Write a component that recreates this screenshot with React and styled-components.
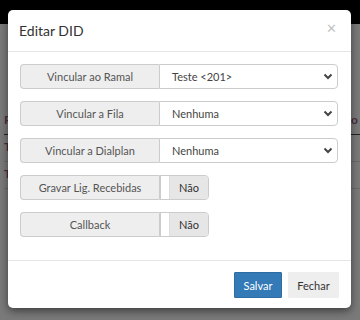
import React from 'react';
import styled, { createGlobalStyle } from 'styled-components';

const GlobalStyle = createGlobalStyle`
  html, body { margin: 0; padding: 0; }
  body { font-family: Lato, "Liberation Sans", sans-serif; }
  #root { height: 320px; overflow: hidden; }
`;

const Page = styled.div`
  position: relative;
  height: 320px;
  background: #7a7a7a;
`;

const TopBar = styled.div`
  height: 24px;
  background: #000;
`;

const BgTable = styled.div`
  padding: 84px 0 0 4px;
  font-size: 12px;
  font-weight: bold;
  color: #4a2f3e;
`;

const BgRow = styled.div`
  height: 26px;
  line-height: 24px;
  border-bottom: 1px solid ${p => (p.$head ? '#222' : '#6a6a6a')};
  display: flex;
  justify-content: space-between;
  padding-right: 2px;
`;

const Modal = styled.div`
  position: absolute;
  left: 8px;
  top: 10px;
  width: 343px;
  height: 298px;
  background: #fff;
  border-radius: 5px;
  box-shadow: 0 3px 9px rgba(0, 0, 0, 0.5);
  display: flex;
  flex-direction: column;
`;

const Header = styled.div`
  height: 41px;
  padding: 0 12px 0 11px;
  border-bottom: 1px solid #e5e5e5;
  display: flex;
  align-items: center;
  justify-content: space-between;
`;

const Title = styled.h4`
  margin: 0;
  font-size: 14px;
  font-weight: normal;
  color: #333;
`;

const Close = styled.span`
  font-family: "DejaVu Sans", sans-serif;
  font-size: 13px;
  color: #c4c4c4;
  margin-top: -4px;
  margin-right: 2px;
`;

const Body = styled.div`
  padding: 12px 13px 0 12px;
  flex: 1;
`;

const Row = styled.div`
  display: flex;
  height: 25px;
  margin-bottom: 12px;
`;

const Label = styled.div`
  width: 139px;
  box-sizing: border-box;
  border: 1px solid #ccc;
  border-right: none;
  border-radius: 4px 0 0 4px;
  background: #eee;
  color: #555;
  font-size: 11px;
  display: flex;
  align-items: center;
  justify-content: center;
`;

const Select = styled.div`
  flex: 1;
  box-sizing: border-box;
  border: 1px solid #ccc;
  border-radius: 0 4px 4px 0;
  color: #444;
  font-size: 11px;
  padding: 0 4px 0 12px;
  display: flex;
  align-items: center;
  justify-content: space-between;
`;

const Switch = styled.div`
  display: flex;
  box-sizing: border-box;
  border: 1px solid #ccc;
  border-radius: 0 4px 4px 0;
  overflow: hidden;
`;

const SwitchGap = styled.span`
  width: 8px;
  background: #fff;
  border-left: 1px solid #ccc;
  border-right: 1px solid #ddd;
`;

const SwitchOff = styled.span`
  width: 38px;
  background: #e6e6e6;
  color: #333;
  font-size: 11px;
  display: flex;
  align-items: center;
  justify-content: center;
`;

const Footer = styled.div`
  border-top: 1px solid #e5e5e5;
  padding: 11px 12px 10px;
  display: flex;
  justify-content: flex-end;
  gap: 6px;
`;

const Button = styled.button`
  height: 26px;
  padding: 0;
  width: ${p => (p.$primary ? 48 : 51)}px;
  border: 1px solid ${p => (p.$primary ? '#2e6da4' : '#eee')};
  border-radius: 1px;
  background: ${p => (p.$primary ? '#337ab7' : '#eee')};
  color: ${p => (p.$primary ? '#fff' : '#333')};
  font-family: Lato, "Liberation Sans", sans-serif;
  font-size: 11px;
`;

const Chevron = () => (
  <svg width="10" height="7" viewBox="0 0 10 7">
    <path d="M1.5 1.5 L5 5 L8.5 1.5" fill="none" stroke="#444" strokeWidth="2" />
  </svg>
);

const selects = [
  { label: 'Vincular ao Ramal', value: 'Teste <201>' },
  { label: 'Vincular a Fila', value: 'Nenhuma' },
  { label: 'Vincular a Dialplan', value: 'Nenhuma' },
];

const switches = ['Gravar Lig. Recebidas', 'Callback'];

export default function App() {
  return (
    <Page>
      <GlobalStyle />
      <TopBar />
      <BgTable>
        <BgRow $head><span>R</span><span>o</span></BgRow>
        <BgRow><span>T</span></BgRow>
        <BgRow><span>T</span></BgRow>
      </BgTable>
      <Modal>
        <Header>
          <Title>Editar DID</Title>
          <Close>✕</Close>
        </Header>
        <Body>
          {selects.map(s => (
            <Row key={s.label}>
              <Label>{s.label}</Label>
              <Select>
                <span>{s.value}</span>
                <Chevron />
              </Select>
            </Row>
          ))}
          {switches.map(s => (
            <Row key={s}>
              <Label>{s}</Label>
              <Switch>
                <SwitchGap />
                <SwitchOff>Não</SwitchOff>
              </Switch>
            </Row>
          ))}
        </Body>
        <Footer>
          <Button $primary>Salvar</Button>
          <Button>Fechar</Button>
        </Footer>
      </Modal>
    </Page>
  );
}
